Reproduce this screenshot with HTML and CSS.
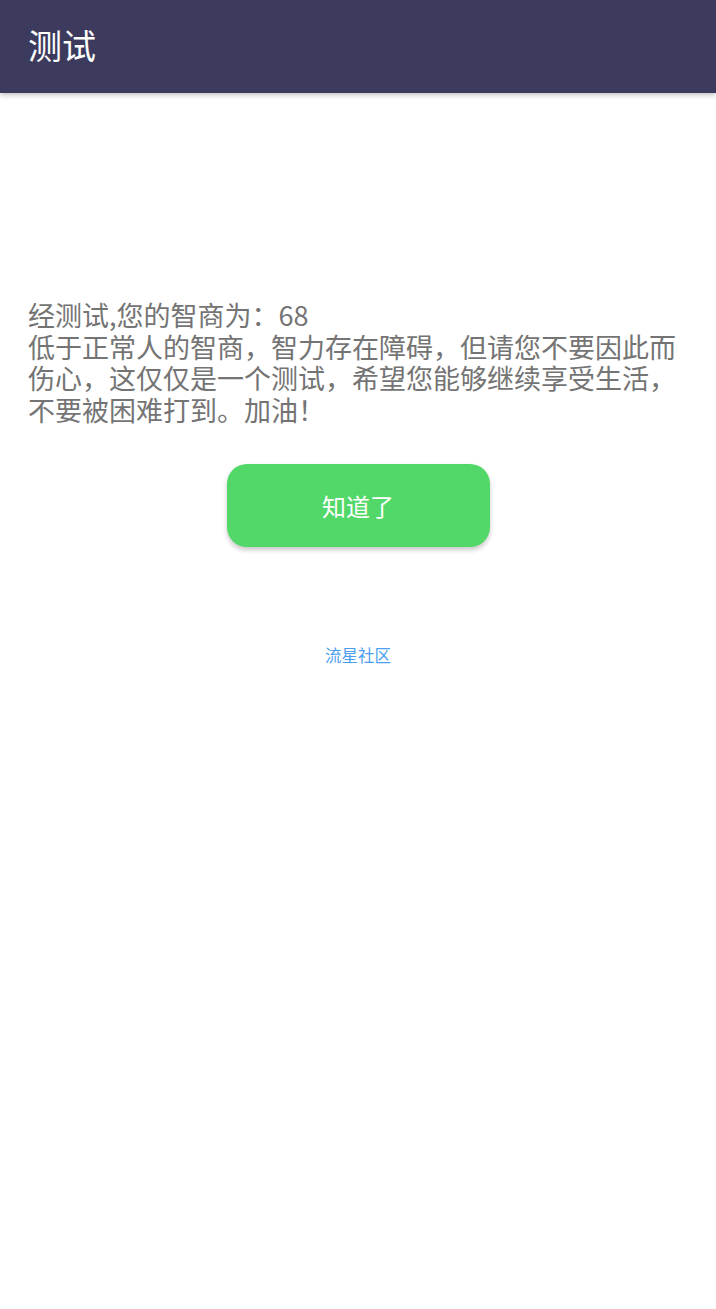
FILE: index.html
```html
<!DOCTYPE html>
<html lang="zh-CN">
<head>
<meta charset="utf-8">
<title>测试</title>
<link rel="stylesheet" href="styles.css">
</head>
<body>
<header class="appbar">
  <h1 class="appbar-title">测试</h1>
</header>
<main class="content">
  <p class="result">经测试,您的智商为：68<br>低于正常人的智商，智力存在障碍，但请您不要因此而伤心，这仅仅是一个测试，希望您能够继续享受生活，不要被困难打到。加油！</p>
  <div class="actions">
    <button class="btn-ok" type="button">知道了</button>
  </div>
  <a class="footer-link" href="#">流星社区</a>
</main>
</body>
</html>
```
FILE: styles.css
```css
* { box-sizing: border-box; }
html, body {
  margin: 0;
  padding: 0;
  background: #ffffff;
  font-family: "Noto Sans CJK SC", "Noto Sans", sans-serif;
}
.appbar {
  height: 93px;
  background: #3c3a5d;
  display: flex;
  align-items: center;
  padding: 0 28px;
  box-shadow: 0 2px 5px rgba(0,0,0,0.25);
  position: relative;
  z-index: 1;
}
.appbar-title {
  margin: 0;
  color: #ffffff;
  font-size: 34px;
  font-weight: 400;
  line-height: 1;
  position: relative;
  top: -2px;
}
.content {
  display: flex;
  flex-direction: column;
  padding: 206px 28px 0;
}
.result {
  margin: 0;
  color: #747474;
  font-size: 27px;
  line-height: 31.6px;
  letter-spacing: 0;
}
.actions {
  display: flex;
  justify-content: center;
  margin-top: 39px;
}
.btn-ok {
  width: 263px;
  height: 83px;
  border: none;
  border-radius: 20px;
  background: #52d869;
  color: #ffffff;
  font-family: "Noto Sans CJK SC", sans-serif;
  font-size: 24px;
  box-shadow: 0 3px 5px rgba(0,0,0,0.22);
  padding: 0;
}
.footer-link {
  align-self: center;
  margin-top: 98px;
  color: #4c9ff0;
  font-size: 16.5px;
  line-height: 20px;
  text-decoration: none;
}
```
